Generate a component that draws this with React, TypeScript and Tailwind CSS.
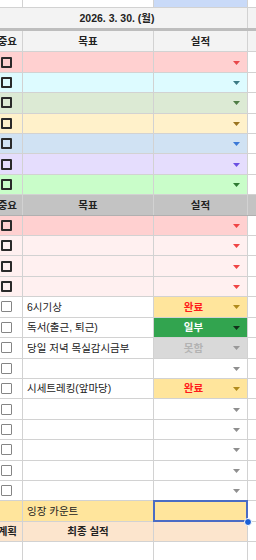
import React from 'react'

type Status = 'none' | 'done' | 'part' | 'miss'

const colorRows = [
    { bg: 'bg-[#ffd0d0]', arrow: '#e8474a' },
    { bg: 'bg-[#ddfbff]', arrow: '#3c7a84' },
    { bg: 'bg-[#dcead4]', arrow: '#4f7d45' },
    { bg: 'bg-[#fff1ca]', arrow: '#9a7420' },
    { bg: 'bg-[#d0e2f3]', arrow: '#3a78d6' },
    { bg: 'bg-[#e5ddfd]', arrow: '#6a4fe2' },
    { bg: 'bg-[#c9fdc9]', arrow: '#2e7a32' },
]

const pinkRows = [
    { bg: 'bg-[#ffd0d0]', arrow: '#ef4444' },
    { bg: 'bg-[#fff0f0]', arrow: '#ef4444' },
    { bg: 'bg-[#fff0f0]', arrow: '#ef4444' },
    { bg: 'bg-[#fff0f0]', arrow: '#ef4444' },
]

const tasks: { text: string; status: Status }[] = [
    { text: '6시기상', status: 'done' },
    { text: '독서(출근, 퇴근)', status: 'part' },
    { text: '당일 저녁 목실감시금부', status: 'miss' },
    { text: '', status: 'none' },
    { text: '시세트레킹(앞마당)', status: 'done' },
    { text: '', status: 'none' },
    { text: '', status: 'none' },
    { text: '', status: 'none' },
    { text: '', status: 'none' },
    { text: '', status: 'none' },
]

function Arrow({ color }: { color: string }) {
    return (
        <svg width="7" height="4" viewBox="0 0 7 4" className="mr-[7px] mt-px shrink-0">
            <polygon points="0,0 7,0 3.5,4" fill={color} />
        </svg>
    )
}

function Check({ dark }: { dark: boolean }) {
    return (
        <div
            className={
                dark
                    ? 'ml-px h-[11px] w-[11px] rounded-[1px] border-2 border-[#2a2a2a]'
                    : 'ml-px h-[11px] w-[11px] rounded-[1px] border-[1.5px] border-[#858585]'
            }
        />
    )
}

function ColorRow({ bg, arrow }: { bg: string; arrow: string }) {
    return (
        <div className="grid h-[20.42px] grid-cols-[23px_131px_94px_1fr] border-b border-[#d2d2d2]">
            <div className={`flex items-center border-r border-[#d2d2d2] ${bg}`}>
                <Check dark />
            </div>
            <div className={`border-r border-[#d2d2d2] ${bg}`} />
            <div className={`flex items-center justify-end border-r border-[#d2d2d2] ${bg}`}>
                <Arrow color={arrow} />
            </div>
            <div className="bg-white" />
        </div>
    )
}

function StatusCell({ status }: { status: Status }) {
    if (status === 'done') {
        return (
            <div className="flex items-center border-r border-[#d2d2d2] bg-[#ffe59c]">
                <span className="flex-1 text-center font-bold text-[#ff1a1a]">완료</span>
                <Arrow color="#b08a1c" />
            </div>
        )
    }
    if (status === 'part') {
        return (
            <div className="flex items-center border-r border-[#d2d2d2] bg-[#32a44f]">
                <span className="flex-1 text-center font-bold text-white">일부</span>
                <Arrow color="#13301a" />
            </div>
        )
    }
    if (status === 'miss') {
        return (
            <div className="flex items-center border-r border-[#d2d2d2] bg-[#d9d9d9]">
                <span className="flex-1 text-center font-bold text-[#b3b3b3]">못함</span>
                <Arrow color="#999999" />
            </div>
        )
    }
    return (
        <div className="flex items-center justify-end border-r border-[#d2d2d2] bg-white">
            <Arrow color="#8f8f8f" />
        </div>
    )
}

function TaskRow({ text, status }: { text: string; status: Status }) {
    return (
        <div className="grid h-[20.42px] grid-cols-[23px_131px_94px_1fr] border-b border-[#d2d2d2]">
            <div className="flex items-center border-r border-[#d2d2d2] bg-white">
                <Check dark={false} />
            </div>
            <div className="flex items-center overflow-visible whitespace-nowrap border-r border-[#d2d2d2] bg-white pl-[4px] text-[#222]">
                {text}
            </div>
            <StatusCell status={status} />
            <div className="bg-white" />
        </div>
    )
}

export default function App() {
    return (
        <div className="h-[560px] w-[256px] overflow-hidden bg-white font-['Liberation_Sans','Noto_Sans_CJK_KR',sans-serif] text-[10.5px] leading-none text-[#222]">
            {/* top partial row */}
            <div className="grid h-[8px] grid-cols-[23px_131px_94px_1fr] border-b border-[#d2d2d2]">
                <div className="border-r border-[#d2d2d2]" />
                <div className="border-r border-[#d2d2d2]" />
                <div className="border-r border-[#d2d2d2] bg-[#c9daf8]" />
                <div />
            </div>

            {/* date */}
            <div className="grid h-[20px] grid-cols-[248px_1fr] bg-[#f3f3f3]">
                <div className="flex items-center justify-center border-r border-[#d2d2d2] pr-[13px] font-bold">
                    2026. 3. 30. (월)
                </div>
                <div />
            </div>
            <div className="h-[3px] bg-[#bdbdbd]" />

            {/* header 1 */}
            <div className="grid h-[21.42px] grid-cols-[23px_131px_94px_1fr] border-b border-[#d2d2d2] bg-[#f3f3f3] font-bold">
                <div className="flex items-center justify-end overflow-hidden whitespace-nowrap border-r border-[#d2d2d2] pr-[5px]">
                    중요
                </div>
                <div className="flex items-center justify-center border-r border-[#d2d2d2]">목표</div>
                <div className="flex items-center justify-center border-r border-[#d2d2d2]">실적</div>
                <div />
            </div>

            {colorRows.map((r, i) => (
                <ColorRow key={i} bg={r.bg} arrow={r.arrow} />
            ))}

            {/* header 2 */}
            <div className="grid h-[20.42px] grid-cols-[23px_131px_94px_1fr] border-b border-[#b0b0b0] bg-[#c3c3c3] font-bold">
                <div className="flex items-center justify-end overflow-hidden whitespace-nowrap border-r border-[#d2d2d2] pr-[5px]">
                    중요
                </div>
                <div className="flex items-center justify-center border-r border-[#d2d2d2]">목표</div>
                <div className="flex items-center justify-center border-r border-[#d2d2d2]">실적</div>
                <div />
            </div>

            {pinkRows.map((r, i) => (
                <ColorRow key={i} bg={r.bg} arrow={r.arrow} />
            ))}

            {tasks.map((t, i) => (
                <TaskRow key={i} text={t.text} status={t.status} />
            ))}

            {/* count row */}
            <div className="grid h-[20.42px] grid-cols-[23px_131px_94px_1fr] border-b border-[#d2d2d2]">
                <div className="border-r border-[#d2d2d2] bg-[#ffe59c]" />
                <div className="flex items-center border-r border-[#d2d2d2] bg-[#ffe59c] pl-[4px]">잉장 카운트</div>
                <div className="relative border-r border-[#d2d2d2] bg-[#ffe59c]">
                    <div className="absolute -top-px -left-px -right-px -bottom-px border-2 border-[#4a6cc4]" />
                    <div className="absolute -bottom-[5px] -right-[5px] h-[8px] w-[8px] rounded-full border border-white bg-[#1a5fd6]" />
                </div>
                <div className="bg-white" />
            </div>

            {/* final row */}
            <div className="grid h-[20.42px] grid-cols-[23px_131px_94px_1fr] border-b border-[#d2d2d2] font-bold">
                <div className="flex items-center justify-end overflow-hidden whitespace-nowrap border-r border-[#d2d2d2] bg-[#fce5cd] pr-[5px]">
                    계획
                </div>
                <div className="flex items-center justify-center border-r border-[#d2d2d2] bg-[#fce5cd]">최종 실적</div>
                <div className="border-r border-[#d2d2d2] bg-[#fce5cd]" />
                <div className="bg-white" />
            </div>

            <div className="grid h-[20px] grid-cols-[23px_131px_94px_1fr]">
                <div className="border-r border-[#d2d2d2]" />
                <div className="border-r border-[#d2d2d2]" />
                <div className="border-r border-[#d2d2d2]" />
                <div />
            </div>
        </div>
    )
}
